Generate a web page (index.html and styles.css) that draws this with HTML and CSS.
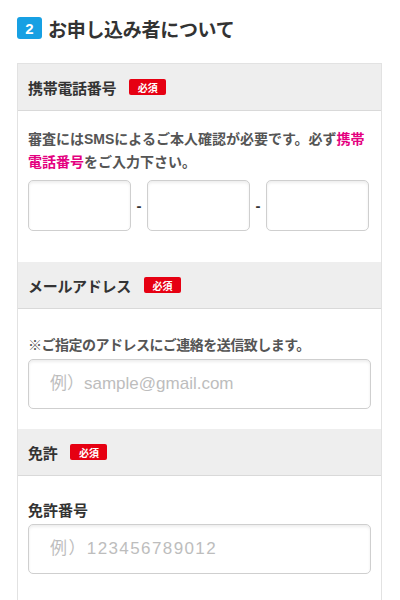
FILE: index.html
```html
<!DOCTYPE html>
<html lang="ja">
<head>
<meta charset="utf-8">
<link rel="stylesheet" href="styles.css">
</head>
<body>
<div class="page">
  <h2 class="title"><span class="num">2</span><span class="title-text">お申し込み者について</span></h2>
  <div class="card">
    <div class="head"><span class="label">携帯電話番号</span><span class="req">必須</span></div>
    <div class="body body-phone">
      <p class="desc">審査にはSMSによるご本人確認が必要です。必ず<span class="pink">携帯</span><span class="pink">電話番号</span>をご入力下さい。</p>
      <div class="phone-row">
        <input class="field phone" type="tel">
        <span class="dash">-</span>
        <input class="field phone" type="tel">
        <span class="dash">-</span>
        <input class="field phone" type="tel">
      </div>
    </div>
    <div class="head"><span class="label">メールアドレス</span><span class="req">必須</span></div>
    <div class="body body-mail">
      <p class="note">※ご指定のアドレスにご連絡を送信致します。</p>
      <input class="field wide" type="email" placeholder="例）sample@gmail.com">
    </div>
    <div class="head"><span class="label">免許</span><span class="req">必須</span></div>
    <div class="body body-license">
      <p class="sublabel">免許番号</p>
      <input class="field wide digits" type="text" placeholder="例）123456789012">
    </div>
  </div>
</div>
</body>
</html>
```
FILE: styles.css
```css
html, body {
  margin: 0;
  padding: 0;
  background: #fff;
}
body {
  font-family: "Liberation Sans", "Noto Sans CJK JP", sans-serif;
  color: #333;
}
.page {
  padding: 17px 18px 0 17px;
}
.title {
  display: flex;
  align-items: center;
  margin: 0;
  height: 22px;
}
.num {
  display: flex;
  align-items: center;
  justify-content: center;
  width: 25px;
  height: 22px;
  border-radius: 3px;
  background: #17a0e3;
  color: #fff;
  font-size: 15px;
  font-weight: bold;
}
.title-text {
  margin-left: 6px;
  font-size: 19px;
  font-weight: bold;
  color: #333;
  letter-spacing: -0.3px;
}
.card {
  margin-top: 24px;
  border: 1px solid #e2e2e2;
  border-bottom: none;
  background: #fff;
}
.head {
  display: flex;
  align-items: center;
  height: 46px;
  padding-left: 10px;
  background: #eeeeee;
  border-bottom: 1px solid #d9d9d9;
}
.label {
  font-size: 15px;
  font-weight: bold;
  color: #333;
  letter-spacing: -0.3px;
}
.req {
  display: flex;
  align-items: center;
  justify-content: center;
  margin-left: 13px;
  width: 37px;
  height: 16px;
  border-radius: 2px;
  background: #e60012;
  color: #fff;
  font-size: 10px;
  font-weight: bold;
}
.body {
  padding: 0 10px;
}
.body-phone {
  padding-top: 17px;
  padding-bottom: 31px;
}
.desc {
  margin: 0;
  font-size: 14px;
  line-height: 23px;
  font-weight: bold;
  color: #555;
}
.pink {
  color: #e4007f;
}
.phone-row {
  display: flex;
  align-items: center;
  margin-top: 6px;
}
.dash {
  width: 16px;
  text-align: center;
  font-size: 15px;
  font-weight: bold;
  color: #333;
}
.field {
  box-sizing: border-box;
  margin: 0;
  border: 1px solid #cfcfcf;
  border-radius: 5px;
  background: #fff;
  box-shadow: inset 0 2px 3px rgba(0, 0, 0, 0.07);
  outline: none;
  font-family: "Liberation Sans", "Noto Sans CJK JP", sans-serif;
  font-size: 17px;
  color: #333;
}
.phone {
  width: 103px;
  height: 51px;
}
.wide {
  display: block;
  width: 100%;
  height: 50px;
  padding: 0 0 0 21px;
}
.field::placeholder {
  color: #bdbdbd;
}
.digits {
  letter-spacing: 1.4px;
}
.body-mail {
  padding-top: 25px;
  padding-bottom: 20px;
}
.note {
  margin: 0 0 3px;
  font-size: 14px;
  line-height: 22px;
  font-weight: bold;
  color: #555;
  letter-spacing: -0.5px;
}
.body-license {
  padding-top: 24px;
  padding-bottom: 30px;
}
.sublabel {
  margin: 0 0 2px;
  font-size: 15px;
  line-height: 22px;
  font-weight: bold;
  color: #333;
}
```
